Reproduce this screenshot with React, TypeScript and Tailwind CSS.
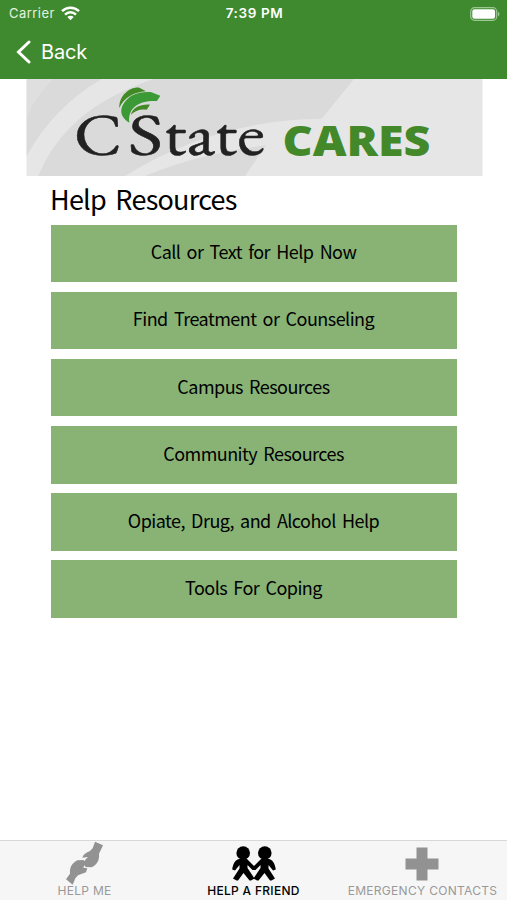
import React from 'react';

const resources = [
    'Call or Text for Help Now',
    'Find Treatment or Counseling',
    'Campus Resources',
    'Community Resources',
    'Opiate, Drug, and Alcohol Help',
    'Tools For Coping',
];

const StatusBar = () => {
    return (
        <div className="flex items-center h-[27px] pl-[9px] pr-[7px] text-[13px] text-white">
            <div className="flex-1 flex items-center gap-[6px]">
                <span className="tracking-[0.45px] text-[#e4f3e0]">Carrier</span>
                <svg width="19" height="15" viewBox="0 0 19 15" fill="none" stroke="#fff" strokeWidth="2.5">
                    <path d="M1 5.200C5.800.6 13.200.6 18 5.200" />
                    <path d="M4 8.600c3.200-3 7.800-3 11 0" />
                    <path d="M9.500 14.200 6.300 11c1.800-1.700 4.600-1.700 6.400 0z" fill="#fff" stroke="none" />
                </svg>
            </div>
            <span className="font-semibold text-[13.5px] tracking-[0.6px]">7:39 PM</span>
            <div className="flex-1 flex justify-end">
                <svg width="30" height="14" viewBox="0 0 30 14">
                    <rect x="0.700" y="0.700" width="26" height="12.600" rx="3.800" fill="none" stroke="#9bc892" strokeWidth="1.200" />
                    <rect x="2.300" y="2.300" width="22.800" height="9.400" rx="2.200" fill="#fff" />
                    <path d="M28 4.800c2 .8 2 3.600 0 4.400z" fill="#9bc892" />
                </svg>
            </div>
        </div>
    );
};

const Banner = () => {
    return (
        <svg className="block ml-[26px]" width="457" height="97" viewBox="26 79 457 97">
            <rect x="26.500" y="79" width="456" height="97" fill="#e6e6e6" />
            {/* Background swooshes */}
            <g transform="translate(20 76) scale(0.33333)" fill="#dadada">
                <path d="M20 9H100C65 42 38 80 20 125z" fill="#dfdfdf" />
                <path d="M100 9H245C150 65 75 140 20 240V125C38 80 65 42 100 9z" />
                <path d="M400 9H1002L905 128C700 130 500 185 315 300H55C110 165 220 70 400 9z" />
                <path d="M375 300C480 255 600 225 738 208L675 300z" />
            </g>
            {/* Leaf */}
            <g transform="translate(20 76) scale(0.33333)">
                <path d="M298 96C297 58 330 32 358 35L378 46C342 48 312 65 298 96z" fill="#418a25" />
                <path d="M328 140C306 128 298 108 308 88C325 56 355 46 392 48L421 59L411 75C362 72 322 92 328 140z" fill="#3b9a35" />
                <path d="M333 116C338 94 362 84 390 86L380 101C360 98 345 104 333 116z" fill="#418a25" />
            </g>
            <g fontFamily="'EB Garamond', 'Liberation Serif', serif" fill="#222" stroke="#222" strokeWidth="0.5">
                <text x="74" y="155" fontSize="61" textLength="48" lengthAdjust="spacingAndGlyphs">C</text>
                <text x="128" y="155" fontSize="61" textLength="35" lengthAdjust="spacingAndGlyphs">S</text>
                <text x="164" y="155" fontSize="62" textLength="101" lengthAdjust="spacingAndGlyphs">tate</text>
            </g>
            <text x="282.500" y="156" fontSize="43" fontWeight="800" fontFamily="'Open Sans', sans-serif" fill="#43892a" textLength="148" lengthAdjust="spacingAndGlyphs">CARES</text>
        </svg>
    );
};

const HandsIcon = () => (
    <svg width="38" height="44" viewBox="0 0 114 132" fill="#929292">
        <path d="M87 2L111 13L99 38C101 58 92 72 76 79L59 78L51 68L58 56L66 48L49 50C51 42 58 36 72 30L80 22z" />
        <path d="M20 131L0 115L12 98C10 78 20 65 34 58L52 57L58 62L52 80L64 82L60 94L36 103L28 112z" />
    </svg>
);

const FriendsIcon = () => (
    <svg width="44" height="35" viewBox="0 0 44 35" fill="#000">
        <circle cx="11.200" cy="7" r="6.800" />
        <circle cx="32.800" cy="7" r="6.800" />
        <path d="M7 13h8l7 7 7-7h8c4 1 6 5 6.800 10.500L41 24.500 36.500 19v3.500L43 32.500 39.500 34.500h-1.500L32.500 27 26.500 34.500h-1.500L21.500 32.500 28.500 22v-3L23.500 24h-3L15.500 19v3L22.500 32.500 19 34.500h-1.500L11.500 27 6 34.500H4.500L1 32.500 7.500 22.500V19L3 24.500.2 23.500C1 18 3 14 7 13z" />
    </svg>
);

const CrossIcon = () => (
    <svg width="34" height="34" viewBox="0 0 34 34" fill="#929292">
        <path d="M11.500 0.500h11v11h11v11h-11v11h-11v-11h-11v-11h11z" />
    </svg>
);

const App = () => {
    return (
        <div className="w-[507px] h-[900px] bg-white flex flex-col overflow-hidden font-['Inter',sans-serif]">
            <header className="h-[79px] bg-[#3f8a2e] shrink-0">
                <StatusBar />
                <div className="flex items-center h-[50px] pl-[16px] text-white">
                    <svg width="15" height="24" viewBox="0 0 15 24" fill="none" stroke="#fff" strokeWidth="3" strokeLinecap="round">
                        <path d="M13 2 2.500 12 13 22" />
                    </svg>
                    <span className="ml-[10px] text-[20px] tracking-[-0.2px]">Back</span>
                </div>
            </header>

            <main className="flex-1 font-['Noto_Sans_CJK_KR',sans-serif] text-black">
                <Banner />
                <h1 className="ml-[50px] mt-[3px] h-[45.500px] leading-[40px] text-[27px] tracking-[-0.75px] [word-spacing:4px]">Help Resources</h1>
                <div className="mx-auto w-[406px] flex flex-col gap-[9.700px]">
                    {resources.map((label) => (
                        <button key={label} className="h-[57.500px] pb-[4px] bg-[#88b375] text-[18px] leading-none tracking-[-0.54px] [word-spacing:2.7px]">
                            {label}
                        </button>
                    ))}
                </div>
            </main>

            <nav className="h-[60px] shrink-0 flex bg-[#f6f6f6] border-t border-[#d8d8d8] text-[12px] text-[#999]">
                <div className="w-[169px] flex flex-col items-center">
                    <div className="h-[41px] flex items-start"><HandsIcon /></div>
                    <span className="tracking-[0.3px]">HELP ME</span>
                </div>
                <div className="w-[169px] flex flex-col items-center text-black">
                    <div className="h-[41px] flex items-start pt-[5px]"><FriendsIcon /></div>
                    <span className="font-medium tracking-[0.3px]">HELP A FRIEND</span>
                </div>
                <div className="w-[169px] flex flex-col items-center">
                    <div className="h-[41px] flex items-start pt-[6px] pr-[2px]"><CrossIcon /></div>
                    <span className="tracking-[0.3px]">EMERGENCY CONTACTS</span>
                </div>
            </nav>
        </div>
    );
};

export default App;
